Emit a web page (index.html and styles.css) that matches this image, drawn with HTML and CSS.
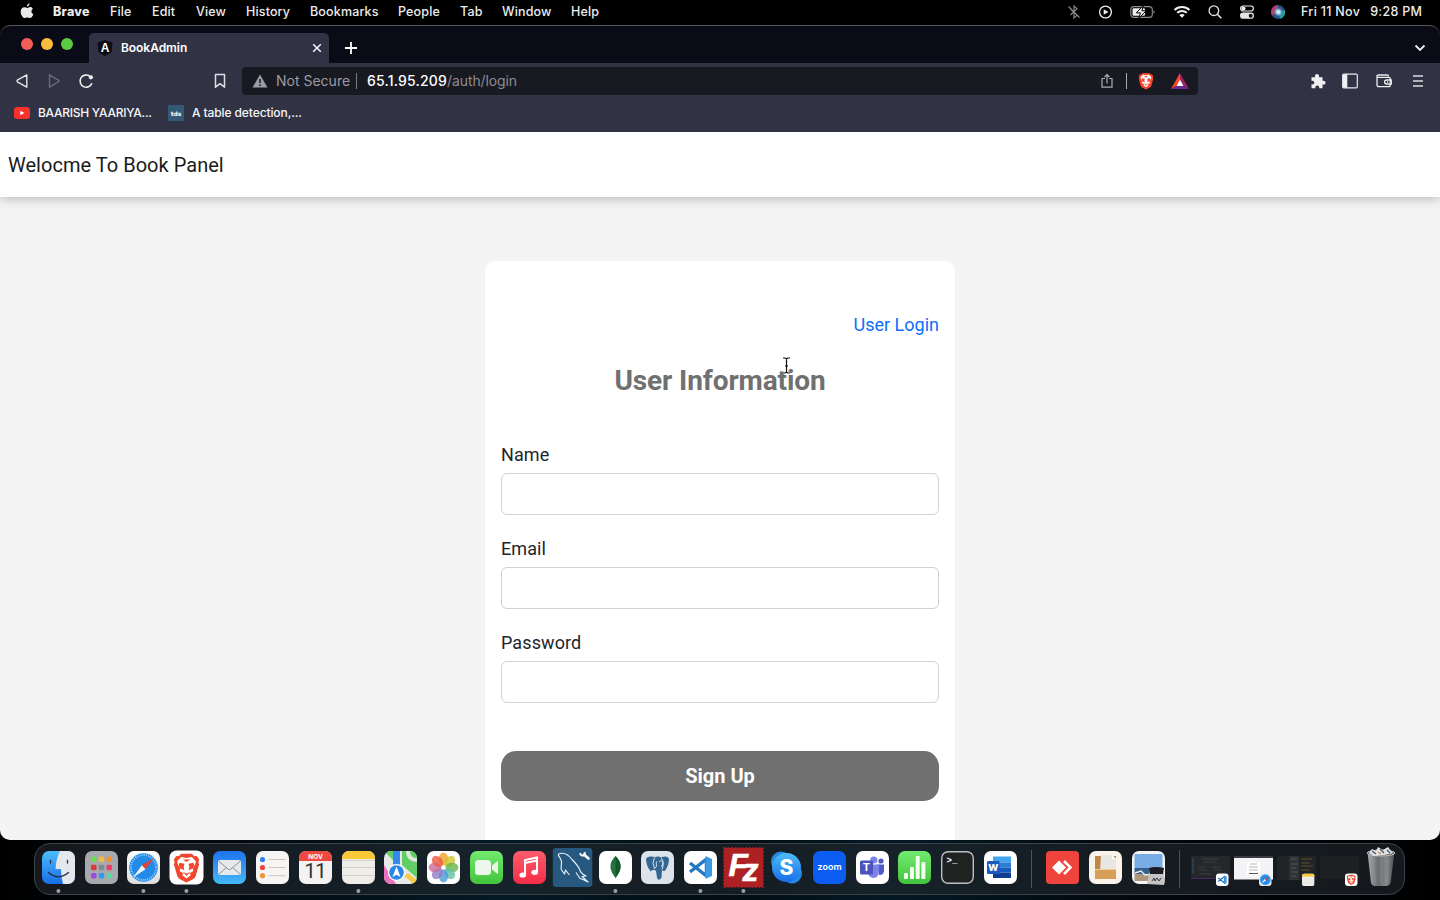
FILE: index.html
```html
<!DOCTYPE html>
<html lang="en">
<head>
<meta charset="utf-8">
<title>BookAdmin</title>
<link rel="stylesheet" href="styles.css">
</head>
<body>
<div class="desktop">
  <header class="menubar">
    <svg class="apple" width="14" height="17" viewBox="0 0 14 17"><path fill="#e9e9e9" d="M9.6.6c.1 1.500-1.200 3-2.700 3C6.700 2.200 8.100.7 9.600.6zM12.800 5.900c-2 1.200-1.700 4.200.6 5.100-.6 1.800-2 4-3.300 4-1 0-1.500-.6-2.800-.6s-1.800.6-2.700.6C2.900 15 .7 11.700.7 8.700c0-2.900 1.800-4.500 3.600-4.500 1.200 0 2 .7 2.900.7.9 0 1.700-.8 3.100-.8 1 0 2 .6 2.500 1.800z"/></svg>
    <nav class="menus"><b>Brave</b><span>File</span><span>Edit</span><span>View</span><span>History</span><span>Bookmarks</span><span>People</span><span>Tab</span><span>Window</span><span>Help</span></nav>
    <div class="status">
      <svg width="14" height="16" viewBox="0 0 14 16" fill="none" stroke="#8c8c8c" stroke-width="1.100"><path d="M3.500 5l6.500 6.200L7 14V2l3 2.700-6.500 6.300M1.500 2.500l11 11"/></svg>
      <svg width="14" height="16" viewBox="0 0 14 16"><circle cx="7.500" cy="8" r="5.900" fill="none" stroke="#eee" stroke-width="1.300"/><path fill="#eee" d="M5.700 5.200L10.500 8l-4.800 2.800z"/></svg>
      <svg width="26" height="16" viewBox="0 0 26 16"><rect x=".8" y="2.600" width="21.500" height="10.800" rx="3" fill="none" stroke="#8d8d8d" stroke-width="1.100"/><path fill="#8d8d8d" d="M23.500 6.200c1.600.6 1.600 3 0 3.600z"/><rect x="2.500" y="4.200" width="12.500" height="7.600" rx="1.300" fill="#eee"/><path fill="#eee" stroke="#000" stroke-width="1" d="M13.300 1.500L6.300 8.900h4.200L8.700 14.500l7.500-7.700h-4.300z"/></svg>
      <svg width="18" height="16" viewBox="0 0 18 16" fill="none" stroke="#f1f1f1" stroke-width="2"><path d="M1.500 6c4.200-4 10.800-4 15 0M4.200 8.800c2.700-2.500 6.900-2.500 9.600 0"/><path stroke="none" fill="#f1f1f1" d="M6.300 11c1.500-1.400 3.900-1.400 5.400 0L9 13.800z"/></svg>
      <svg width="14" height="16" viewBox="0 0 14 16" fill="none" stroke="#e5e5e5" stroke-width="1.300"><circle cx="5.900" cy="6.700" r="4.800"/><path stroke-width="1.600" d="M9.300 10.200l4 4"/></svg>
      <svg width="16" height="16" viewBox="0 0 16 16"><rect x="1.600" y="2" width="12.800" height="5" rx="2.500" fill="none" stroke="#eee" stroke-width="1.200"/><circle cx="4.500" cy="4.500" r="2" fill="#eee"/><rect x="1" y="8.600" width="14" height="6.200" rx="3.100" fill="#e5e5e5"/><circle cx="11.700" cy="11.700" r="2" fill="#111"/></svg>
      <svg width="14" height="16" viewBox="0 0 14 16"><defs><radialGradient id="siri"><stop offset="0" stop-color="#fff"/><stop offset=".35" stop-color="#9cdceb"/><stop offset="1" stop-color="#2e4b83" stop-opacity="0"/></radialGradient></defs><circle cx="7" cy="8" r="7" fill="#294b85"/><path fill="#b83f75" d="M7 8L1 11.500A7 7 0 0 1 7 1z"/><path fill="#279e9a" d="M7 8l7-2a7 7 0 0 1-5 8.700z"/><circle cx="7.300" cy="8" r="5.500" fill="url(#siri)"/></svg>
    </div>
    <div class="clock"><span>Fri 11 Nov</span><span>9:28 PM</span></div>
  </header>

  <div class="window">
    <div class="tabstrip">
      <div class="lights"><i class="close"></i><i class="min"></i><i class="max"></i></div>
      <div class="tab">
        <svg width="16" height="16" viewBox="0 0 16 16"><path fill="#0b0d17" d="M8 0l7.500 2.500-1.100 10L8 16l-6.400-3.500-1.100-10z"/><text x="8" y="12.200" text-anchor="middle" class="tab-letter">A</text></svg>
        <span class="tab-title">BookAdmin</span>
        <svg width="10" height="10" viewBox="0 0 10 10" stroke="#fff" stroke-width="1.400"><path d="M1.200 1.200l7.600 7.600M8.800 1.200L1.200 8.800"/></svg>
      </div>
      <svg class="plus" width="14" height="14" viewBox="0 0 14 14" stroke="#fff" stroke-width="1.800"><path d="M7 1v12M1 7h12"/></svg>
      <svg class="chev" width="12" height="8" viewBox="0 0 12 8" fill="none" stroke="#eee" stroke-width="1.800"><path d="M1.500 1.500L6 6l4.500-4.500"/></svg>
    </div>
    <div class="toolbar">
      <div class="nav">
        <svg width="14" height="16" viewBox="0 0 14 16" fill="none" stroke="#e4e4e8" stroke-width="1.400" stroke-linejoin="round"><path d="M11.800 1.800v12.400L2.300 8.800q-.8-.8 0-1.600z"/></svg>
        <svg width="14" height="16" viewBox="0 0 14 16" fill="none" stroke="#696b78" stroke-width="1.400" stroke-linejoin="round"><path d="M2.500 1.800v12.400L11.700 8.700q.6-.7 0-1.400z"/></svg>
        <svg width="16" height="16" viewBox="0 0 16 16" fill="none" stroke="#eee" stroke-width="1.600"><path d="M13.900 10.200A6.100 6.100 0 1 1 11.800 3.200"/><circle cx="12.900" cy="4.300" r="2.100" fill="#eee" stroke="none"/></svg>
      </div>
      <svg class="mark" width="12" height="16" viewBox="0 0 12 16" fill="none" stroke="#dedee3" stroke-width="1.500" stroke-linejoin="round"><path d="M1.500 1.500h9v12.700L6 10.700l-4.500 3.500z"/></svg>
      <div class="address">
        <svg width="16" height="14" viewBox="0 0 16 14"><path fill="#9a9ba4" d="M8 .5L15.500 13.500H.5z"/><path stroke="#191922" stroke-width="1.500" d="M8 5v4M8 10.300v1.600"/></svg>
        <span class="insecure">Not Secure</span><i class="bar"></i>
        <span class="url"><b>65.1.95.209</b>/auth/login</span>
        <svg class="share" width="12" height="16" viewBox="0 0 12 16" fill="none" stroke="#aaaab0" stroke-width="1.200"><path d="M4 5.500H1v8.700h10V5.500H8M6 10.500V1.700M3.500 4L6 1.500 8.500 4"/></svg>
        <i class="bar light"></i>
        <svg class="shield" width="16" height="18" viewBox="0 0 33 38"><use href="#lion"/></svg>
        <svg class="bat" width="18" height="16" viewBox="0 0 18 16"><path fill="#ff4724" d="M9 0L0 16l6-3.500L9 7z"/><path fill="#9e1f63" d="M9 0l9 16-6-3.500L9 7z"/><path fill="#662d91" d="M0 16l6-3.500h6l6 3.500z"/><path fill="#fff" d="M9 6.500l3.500 6.500h-7z"/></svg>
      </div>
      <div class="tools">
        <svg width="16" height="16" viewBox="0 0 16 16"><path fill="#f0f0f2" d="M1.500 4.200h3.600c-1-4.200 4.700-4.200 3.900 0h3.500v3.600c4.100-.9 4.100 4.700 0 3.800v3.600H9.200c.6-3.700-4.300-3.700-3.800 0H1.500v-3.900c3.700.8 3.700-4.100 0-3.400z"/></svg>
        <svg width="16" height="16" viewBox="0 0 16 16"><rect x=".7" y="1.200" width="14.600" height="13.600" rx="1" fill="none" stroke="#e8e8eb" stroke-width="1.200"/><path fill="#f0f0f2" d="M.7 1.200h4.600v13.600H.7z"/></svg>
        <svg width="16" height="16" viewBox="0 0 16 16" fill="none" stroke="#ececef" stroke-width="1.300"><path d="M1 3.200v8.500q0 2 2 2h9.500q1.800 0 1.800-2V5.900q0-1.500-1.800-1.500H2.500Q1 4.400 1 3.200 1 2 2.500 2H11q1.500 0 1.500 1.500"/><path d="M15.300 7h-4.500q-2.200 0-2.200 2t2.200 2h4.500z"/><path d="M11 9h1.200"/></svg>
        <svg width="12" height="16" viewBox="0 0 12 16" stroke="#dcdce1" stroke-width="1.500"><path d="M1 3h10M1 8h10M1 13h10"/></svg>
      </div>
    </div>
    <div class="bookmarks">
      <svg width="16" height="12" viewBox="0 0 16 12"><rect width="16" height="12" rx="3" fill="#f5322c"/><path fill="#fff" d="M6.300 3.700L10.500 6 6.300 8.300z"/></svg>
      <span class="bm1">BAARISH YAARIYA...</span>
      <svg width="16" height="16" viewBox="0 0 16 16"><path fill="#355876" d="M0 0h16v16H0z"/><text x="8" y="10.600" text-anchor="middle" class="tds">tds</text></svg>
      <span class="bm2">A table detection,...</span>
    </div>

    <div class="page">
      <div class="banner">Welocme To Book Panel</div>
      <main class="card">
        <a class="login">User Login</a>
        <h1>User Information</h1>
        <form>
          <label>Name<input type="text"></label>
          <label>Email<input type="text"></label>
          <label>Password<input type="text"></label>
          <button type="button">Sign Up</button>
        </form>
      </main>
      <svg class="cursor" width="9" height="17" viewBox="0 0 9 17" fill="none" stroke="#fff" stroke-width="2.600"><path d="M1 1h2.200L4.500 2 5.800 1H8M1 16h2.200l1.300-1 1.300 1H8M4.500 2v13M3 9h3"/><path stroke="#111" stroke-width="1.200" d="M1 1h2.200L4.500 2 5.800 1H8M1 16h2.200l1.300-1 1.300 1H8M4.500 2v13M3 9h3"/></svg>
    </div>
  </div>

  <footer class="dock">
    <svg class="app on" viewBox="-5 -7 42.83 50"><defs>
      <linearGradient id="blue" x2="0" y2="1"><stop stop-color="#4dbdf8"/><stop offset="1" stop-color="#176eea"/></linearGradient>
      <linearGradient id="mailg" x2="0" y2="1"><stop stop-color="#1f72ee"/><stop offset="1" stop-color="#45b8f8"/></linearGradient>
      <linearGradient id="green" x2="0" y2="1"><stop stop-color="#73ea70"/><stop offset="1" stop-color="#42c43c"/></linearGradient>
      <linearGradient id="pink" x2="0" y2="1"><stop stop-color="#fb5c6d"/><stop offset="1" stop-color="#f52d47"/></linearGradient>
      <linearGradient id="silver" x2="0" y2="1"><stop stop-color="#fff"/><stop offset="1" stop-color="#dcdcdf"/></linearGradient>
      <linearGradient id="trashg"><stop stop-color="#aaa"/><stop offset=".4" stop-color="#696d70"/><stop offset=".7" stop-color="#858789"/><stop offset="1" stop-color="#4d5154"/></linearGradient>
      <clipPath id="tile"><rect width="33" height="33" rx="7"/></clipPath>
      <g id="lion"><path fill="#f4452d" d="M10 2h13l3 3 3-.3L32 9l-1 3 .8 3-4 14q-1 3-4 4.500L16.500 37l-7.300-3.500q-3-1.500-4-4.500L1.200 15l.8-3-1-3 3-4.300L7 5z"/><path fill="#fff" d="M10 6l6.500 1L23 6l5 5-1 4-3 5 1 3-5 3 2 2-5.500 4L11 28l2-2-5-3 1-3-3-5-1-4z"/><path fill="#f4452d" d="M8 13l6 1-1 4 1 4-5-2-2-4zM25 13l-6 1 1 4-1 4 5-2 2-4zM12 24l4.500 2 4.500-2-4.500 5zM12 9h9l-4.500 3z"/></g>
    </defs><g clip-path="url(#tile)"><path fill="url(#blue)" d="M0 0h33v33H0z"/><path fill="#e5e7ec" d="M18 0q-4 8-4.500 18H19q0 8 2 15h12V0z"/></g><g fill="none" stroke="#26334a" stroke-width="1.400" stroke-linecap="round"><path d="M8.500 9.500v2.500M25.500 9.500v2.500M6.500 21.500q10 8.500 20 0"/></g><circle class="dot" cx="16.400" cy="40" r="2"/></svg>
    <svg class="app" viewBox="-5 -7 42.83 50"><rect width="33" height="33" rx="7" fill="#a8a9ad"/><g><rect x="6" y="5.500" width="5.500" height="5.500" rx="1.400" fill="#6bdd57"/><rect x="13.700" y="5.500" width="5.500" height="5.500" rx="1.400" fill="#f4b940"/><rect x="21.500" y="5.500" width="5.500" height="5.500" rx="1.400" fill="#f09335"/><rect x="6" y="13.700" width="5.500" height="5.500" rx="1.400" fill="#dd373a"/><rect x="13.700" y="13.700" width="5.500" height="5.500" rx="1.400" fill="#7b8c98"/><rect x="21.500" y="13.700" width="5.500" height="5.500" rx="1.400" fill="#f13c66"/><rect x="6" y="22" width="5.500" height="5.500" rx="1.400" fill="#9b4ae0"/><rect x="13.700" y="22" width="5.500" height="5.500" rx="1.400" fill="#309aef"/><rect x="21.500" y="22" width="5.500" height="5.500" rx="1.400" fill="#62d4a5"/></g></svg>
    <svg class="app" viewBox="-5 -7 42.83 50"><rect width="33" height="33" rx="7" fill="url(#silver)"/><g id="compass"><circle cx="16.500" cy="16.500" r="14.300" fill="#218be7"/><circle cx="16.500" cy="16.500" r="12.500" fill="none" stroke="#d3edff" stroke-width="2" stroke-dasharray=".7 1.480"/><path fill="#ee3d35" d="M27 7L14.800 14.300l3.700 4z"/><path fill="#f4f4f4" d="M6 26.500l8.800-12.200 3.700 4z"/></g><circle class="dot" cx="16.400" cy="40" r="2"/></svg>
    <svg class="app" viewBox="-5 -7 42.83 50"><rect x="-.5" y="-.5" width="34" height="34" rx="7" fill="#fff"/><svg x="3" y="1" width="27" height="31.500" viewBox="0 0 33 38"><use href="#lion"/></svg><circle class="dot" cx="16.400" cy="40" r="2"/></svg>
    <svg class="app" viewBox="-5 -7 42.83 50"><rect width="33" height="33" rx="7" fill="url(#mailg)"/><rect x="5" y="9" width="23" height="15" rx="2" fill="#e7e9ec"/><path fill="none" stroke="#8b929b" d="M5.500 10L15 18q1.500 1.200 3 0l9.500-8M5.500 23.500l8-7M27.500 23.500l-8-7"/></svg>
    <svg class="app" viewBox="-5 -7 42.83 50"><rect width="33" height="33" rx="7" fill="#f7f5f3"/><path stroke="#c9c9ca" d="M12.500 8.500H30M12.500 16.500H30M12.500 24.700H30"/><circle cx="6.500" cy="8.500" r="2.600" fill="#2c80ed"/><circle cx="6.500" cy="16.500" r="2.600" fill="#e94440"/><circle cx="6.500" cy="24.700" r="2.600" fill="#f3963a"/></svg>
    <svg class="app" viewBox="-5 -7 42.83 50"><g clip-path="url(#tile)"><path fill="#f4f2f0" d="M0 0h33v33H0z"/><path fill="#ef4a42" d="M0 0h33v10H0z"/></g><text x="16.500" y="7.900" text-anchor="middle" class="month">NOV</text><text x="16" y="27.500" text-anchor="middle" class="date">11</text></svg>
    <svg class="app" viewBox="-5 -7 42.83 50"><g id="notes" clip-path="url(#tile)"><path fill="#efede8" d="M0 0h33v33H0z"/><path fill="#fbc936" d="M0 0h33v8H0z"/><path stroke="#d3d1cd" d="M0 9.500h33M0 16.500h33M0 24.500h33"/></g><circle class="dot" cx="16.400" cy="40" r="2"/></svg>
    <svg class="app" viewBox="-5 -7 42.83 50"><g clip-path="url(#tile)"><path fill="#e6e9e8" d="M0 0h33v33H0z"/><path fill="#61cd67" d="M0 0h10v10zM18 0h15v27L18 14z"/><circle cx="32" cy="1" r="8" fill="none" stroke="#dfe6dd" stroke-width="4"/><path fill="#ec70be" d="M0 14v19h12z"/><path fill="#f8cb45" d="M24 22l9 7v4h-3L20 25z"/><path fill="#3389ed" d="M9 0h7v20H9z"/></g><circle cx="12.500" cy="21.500" r="8.500" fill="#fff"/><circle cx="12.500" cy="21.500" r="7.300" fill="#2b86e6"/><path fill="#fff" d="M12.500 15.500l4 10.500-4-2.200L8.500 26z"/></svg>
    <svg class="app" viewBox="-5 -7 42.83 50"><rect width="33" height="33" rx="7" fill="#fff"/><g class="petals" transform="translate(16.500 16.500)"><ellipse cy="-8.500" rx="4.800" ry="6.400" fill="#f5a22e"/><ellipse cy="-8.500" rx="4.800" ry="6.400" fill="#d1c735" transform="rotate(45)"/><ellipse cy="-8.500" rx="4.800" ry="6.400" fill="#6bb94c" transform="rotate(90)"/><ellipse cy="-8.500" rx="4.800" ry="6.400" fill="#62c2a4" transform="rotate(135)"/><ellipse cy="-8.500" rx="4.800" ry="6.400" fill="#4e9cda" transform="rotate(180)"/><ellipse cy="-8.500" rx="4.800" ry="6.400" fill="#937fc8" transform="rotate(225)"/><ellipse cy="-8.500" rx="4.800" ry="6.400" fill="#c9709f" transform="rotate(270)"/><ellipse cy="-8.500" rx="4.800" ry="6.400" fill="#ee5c47" transform="rotate(315)"/></g></svg>
    <svg class="app" viewBox="-5 -7 42.83 50"><rect width="33" height="33" rx="7" fill="url(#green)"/><rect x="5" y="9" width="16" height="15" rx="3.500" fill="#eef7ec"/><path fill="#e7f5e5" d="M22 14.500l5-4q1-.5 1 .5v11q0 1-1 .5l-5-4z"/></svg>
    <svg class="app" viewBox="-5 -7 42.83 50"><rect width="33" height="33" rx="7" fill="url(#pink)"/><path fill="none" stroke="#fff" stroke-width="2" d="M12 24V9l12-2.500V21M12 12l12-2.500"/><ellipse cx="9.700" cy="24" rx="3.300" ry="2.600" fill="#fff"/><ellipse cx="21.700" cy="21.300" rx="3.300" ry="2.600" fill="#fff"/></svg>
    <svg class="app" viewBox="-5 -7 42.83 50"><rect x="-3.200" y="-3" width="39.500" height="39" rx="3" fill="#27587f"/><path fill="none" stroke="#eef4fa" stroke-width="1.100" stroke-linejoin="round" d="M2.500 4Q2 2.500 4 2.500c5-1 9 2 12 6 4 4 7 7 8 11 1 3 3 4 6 5.500l-4 .5 6 5.500-5-2.500-3-1-4-6M2.500 4c1 3 3 4 3 7 0 5-1 6 0 8l3 4 1-4 4 5"/><path stroke="#fff" stroke-width="2.600" stroke-linecap="round" d="M28 3.500l4.500 4"/><path fill="none" stroke="#fff" stroke-width="1.800" d="M24.300 2q0 3 3 2.700 2.500-.7 1.200-3.500"/></svg>
    <svg class="app" viewBox="-5 -7 42.83 50"><rect width="33" height="33" rx="7" fill="#fff"/><path fill="#26733f" d="M16.500 5q-9 9-2 19l2 3 2-3q7-10-2-19z"/><path fill="#15572d" d="M16.500 5q9 9 2 19l-2 3z"/><circle class="dot" cx="16.400" cy="40" r="2"/></svg>
    <svg class="app" viewBox="-5 -7 42.83 50"><rect width="33" height="33" rx="7" fill="#dce3eb"/><path fill="#336791" d="M5 8q1-3 5-2.500 3 0 4 .7 3-1.200 6 0 7-2 8 2 0 6-4 11.500-2 .8-3-1l-.5 8q-3 4-4.500 0l-1-7-3-1-2 2Q5 15 5 8z"/><path fill="none" stroke="#e6edf3" stroke-width=".9" d="M13.500 6.500q-3 6 0 11l2-2q-.5-3 0-5M20 6.500q4 5 1 12M18 11q3-3 4 1l-1.500 4M10 20q2 2 4-1"/></svg>
    <svg class="app" viewBox="-5 -7 42.83 50"><rect width="33" height="33" rx="7" fill="#fff"/><g id="vs"><path fill="none" stroke="#2478bf" stroke-width="3.500" stroke-linejoin="round" d="M6 12l16.500 13V8L6 21"/><path fill="#3a9be8" d="M21.500 5l6.500 3v17l-6.500 3z"/></g><circle class="dot" cx="16.400" cy="40" r="2"/></svg>
    <svg class="app" viewBox="-5 -7 42.830 50"><rect x="-3" y="-3" width="39" height="39" fill="#ad2024" stroke="#ad2024" stroke-width="1.600" stroke-dasharray="2 1.500"/><text x="1.500" y="25" class="fz">F<tspan dx="-5.500" dy="5.500">z</tspan></text><circle class="dot" cx="16.400" cy="40" r="2"/></svg>
    <svg class="app" viewBox="-5 -7 42.83 50"><circle cx="11" cy="10.500" r="10" fill="#248cdb"/><circle cx="22" cy="22.500" r="10" fill="#2589df"/><circle cx="16.500" cy="16.500" r="14.500" fill="url(#blue)"/><text x="16.500" y="24.500" text-anchor="middle" class="skype">S</text></svg>
    <svg class="app" viewBox="-5 -7 42.83 50"><rect width="33" height="33" rx="7" fill="#0b5cf1"/><text x="16.500" y="18.800" text-anchor="middle" class="zoom">zoom</text></svg>
    <svg class="app" viewBox="-5 -7 42.83 50"><rect width="33" height="33" rx="7" fill="#fff"/><circle cx="17.800" cy="9" r="3.600" fill="#7b83eb"/><circle cx="25" cy="10" r="2.600" fill="#4f58bd"/><path fill="#5059c9" d="M21 13.500h7v7q-1 4-5 3.500z"/><path fill="#7b83eb" d="M12 13.500h11V21q-1 6-6 6-5-1-5-6z"/><rect x="4" y="9.500" width="13" height="14" rx="1.500" fill="#4b53bc"/><text x="10.500" y="20.500" text-anchor="middle" class="office">T</text></svg>
    <svg class="app" viewBox="-5 -7 42.83 50"><rect width="33" height="33" rx="7" fill="url(#green)"/><g fill="#f3fff1"><rect x="6" y="22" width="4" height="6" rx="1"/><rect x="12" y="16" width="4" height="12" rx="1"/><rect x="17.700" y="5" width="4" height="23" rx="1"/><rect x="23.400" y="11" width="4" height="17" rx="1"/></g></svg>
    <svg class="app" viewBox="-5 -7 42.83 50"><rect x=".7" y=".7" width="31.600" height="31.600" rx="6.500" fill="#202121" stroke="#babfc1" stroke-width="1.400"/><text x="5.500" y="12" class="term">&gt;_</text></svg>
    <svg class="app" viewBox="-5 -7 42.83 50"><rect width="33" height="33" rx="7" fill="#fff"/><path fill="#42a5ee" d="M9 5.500h18v6H9z"/><path fill="#2b7cd3" d="M9 11.500h18v5H9z"/><path fill="#185abd" d="M9 16.500h18v5H9z"/><path fill="#103f91" d="M9 21.500h18V27H9z"/><rect x="3" y="10" width="12.500" height="13" rx="1.200" fill="#185abd"/><text x="9.200" y="19.800" text-anchor="middle" class="word">W</text></svg>
    <i class="sep"></i>
    <svg class="app" viewBox="-5 -7 42.830 50"><rect width="33" height="33" rx="4" fill="#ef443b"/><path fill="#fff" d="M13 9.500l7 7-7 7-7-7z"/><path fill="none" stroke="#fff" stroke-width="2.600" d="M18 10l6.500 6.500L18 23"/></svg>
    <svg class="app" viewBox="-5 -7 42.83 50"><rect width="33" height="33" rx="7" fill="#faf3e9"/><path fill="#bf8749" d="M6 5h21v14H6z"/><path fill="#e8e7e5" d="M12 4h11l4 4v12H11z"/><path fill="#fff" d="M23 4v4h4z"/><path fill="#d79e5a" d="M6 18h21v10H6z"/><path stroke="#f3cd96" d="M6 18.500h21"/></svg>
    <svg class="app" viewBox="-5 -7 42.83 50"><rect width="33" height="33" rx="7" fill="#f3f4f5"/><path fill="#77ade4" d="M2.500 3h28v14h-28z"/><path fill="#35608b" d="M2.500 17h28v6h-28z"/><path fill="#ae977d" d="M2.500 23h28v7h-28z"/><path stroke="#e7edf1" stroke-width="1.500" fill="none" d="M3 22l6-2 4 4 7-1"/><path fill="#c4c4c4" d="M17 24l1-7 13 1 2 12-1 4-17-1z"/><path fill="#1b1d20" d="M17 17q7-2 15 0l-1 6H18z"/><path fill="none" stroke="#333" d="M20 30l2-3 1 3 2-3 2 3 2-3"/></svg>
    <i class="sep second"></i>
    <svg class="app" viewBox="-5 -7 42.83 50"><path fill="#25272b" d="M-3 5h39v23H-3z"/><path stroke="#4c2c61" d="M-3 27.500h39"/><path stroke="#4f5254" stroke-width=".6" d="M8 8h16M10 11h11M4 16h8M18 16h8M5 19h8M20 19h8M5 23h12"/><path stroke="#31506b" d="M-1 7v16"/><rect x="22" y="22.500" width="12.500" height="12.500" rx="3" fill="#fff"/><g transform="translate(22 22.500) scale(.38)"><use href="#vs"/></g></svg>
    <svg class="app" viewBox="-5 -7 42.83 50"><path fill="#f4f4f6" d="M-3 5h39v23.500H-3z"/><path fill="#393a44" d="M-3 5h39v2H-3z"/><path fill="#fff" d="M10 11h13v13H10z"/><path stroke="#999" stroke-width=".7" d="M13 13h7M12 16h9M12 19h9"/><path stroke="#555" d="M12 22.500h9"/><rect x="22" y="22.500" width="12.500" height="12.500" rx="3" fill="#e8eef2"/><g transform="translate(22 22.500) scale(.38)"><use href="#compass"/></g></svg>
    <svg class="app" viewBox="-5 -7 42.83 50"><path fill="#202427" d="M-3 5h39v24H-3z"/><path fill="#303336" d="M9 5h10v24H9z"/><path stroke="#646566" stroke-width=".7" d="M11 8h6M11 13h7M11 17h5M11 21h7M11 25h5"/><path stroke="#7c6332" stroke-width=".7" d="M21 8h11M21 12h9M21 15h12M21 19h9"/><g transform="translate(22 22.500) scale(.38)"><use href="#notes"/></g></svg>
    <svg class="app" viewBox="-5 -7 42.83 50"><path fill="#1d2023" d="M-3 5h39v23H-3z"/><rect x="22" y="22.500" width="12.500" height="12.500" rx="3" fill="#fff"/><svg x="23.500" y="23.200" width="9.500" height="11" viewBox="0 0 33 38"><use href="#lion"/></svg></svg>
    <svg class="app trash" viewBox="-5 -7 42.83 50"><path fill="url(#trashg)" d="M1.500 1l3.500 31q.5 2 3 3h13q3-1 3.500-3L28.500 1z"/><ellipse cx="15" cy="2" rx="14" ry="3" fill="#666a6e" stroke="#b8babb"/><path fill="#e1e3e5" d="M3 2l3-4 4 2 2-4 5 3 5-3 3 4 2 2-9 2-10 1z"/><path stroke="#40515f" stroke-width="1.200" d="M6 0l4 3M14-2l4 4M21-1l3 3"/><path stroke="#c68e55" stroke-width="1.500" d="M12 1l3 2"/><path stroke="#fff" stroke-opacity=".06" stroke-width="2" d="M7 7l2 24M15 7v25M23 7l-2 24"/></svg>
  </footer>
</div>
</body>
</html>
```
FILE: styles.css
```css
* { box-sizing: border-box; }
body { margin: 0; background: #000; overflow: hidden; }
svg { display: block; flex: none; }
.desktop { width: 1440px; height: 900px; display: flex; flex-direction: column; background: linear-gradient(90deg, #000 0%, #020b12 18%, #031a25 35%, #020c13 50%, #031924 62%, #02080e 78%, #000 100%); font-family: Inter, "Liberation Sans", sans-serif; }

.menubar { height: 25px; flex: none; display: flex; align-items: center; padding: 0 18px 2px 20px; background: #000; color: #ececec; font-size: 12.500px; font-weight: 500; white-space: nowrap; }
.menus { display: grid; grid-template-columns: 57px 42px 44px 50px 64px 88px 62px 42px 69px 40px; margin-left: 19px; letter-spacing: .15px; }
.menus b { font-weight: 800; letter-spacing: .3px; }
.status { margin: 1px 0 0 auto; display: grid; grid-template-columns: 31px 32px 43px 35px 31px 32px 14px; align-items: center; }
.clock { display: flex; justify-content: space-between; width: 121px; margin-left: 16px; }
.clock span { letter-spacing: .3px; margin-right: -.3px; }

.window { height: 815px; flex: none; display: flex; flex-direction: column; overflow: hidden; border-radius: 10px; background: #313344; }
.tabstrip { height: 38px; flex: none; display: flex; align-items: center; padding: 7px 14px 0 21px; background: #0b0b17; border-top: 1px solid #56565f; border-radius: 10px 10px 0 0; }
.lights { display: flex; gap: 8px; align-self: flex-start; margin-top: 5px; }
.lights i { width: 12px; height: 12px; border-radius: 50%; }
.close { background: #f25f58; }
.min { background: #f9be3e; }
.max { background: #5acb43; }
.tab { width: 240px; height: 30px; margin-left: 16px; display: flex; align-items: center; padding: 0 7px 0 8px; background: #313344; border-radius: 5px 5px 0 0; }
.tab-letter { font: bold 12px "Liberation Sans", sans-serif; fill: #fff; }
.tab-title { margin: 0 auto 0 8px; padding-bottom: 1px; font-size: 12px; font-weight: 600; color: #fff; letter-spacing: -.05px; }
.plus { margin-left: 15px; }
.chev { margin-left: auto; }

.toolbar { height: 36px; flex: none; display: flex; align-items: center; padding: 0 16px 0 15px; }
.nav { display: grid; grid-template-columns: 32px 31px 16px; align-items: center; }
.mark { margin-left: 120px; }
.address { width: 956px; height: 28px; margin-left: 16px; display: flex; align-items: center; padding: 0 9px 0 10px; background: #191922; border-radius: 4px; font-size: 14px; color: #9a9ba4; }
.insecure { width: 74px; margin: -1px 0 0 8px; white-space: nowrap; }
.bar { width: 1px; height: 16px; margin-left: 6px; background: #777883; }
.url { margin: -1px 0 0 10px; color: #8c8c92; letter-spacing: -.12px; }
.url b { font-weight: 500; letter-spacing: .2px; color: #fff; }
.share { margin-left: auto; }
.light { margin-left: 13px; background: #aaaab0; }
.shield { margin-left: 11px; }
.bat { margin-left: 17px; }
.tools { display: grid; grid-template-columns: 32px 34px 36px 12px; align-items: center; margin-left: auto; }

.bookmarks { height: 33px; flex: none; display: flex; align-items: center; padding: 0 14px 5px; font-size: 12px; font-weight: 500; color: #f6f6f8; white-space: nowrap; }
.bookmarks span { padding-bottom: 2px; }
.bm1 { width: 114px; margin: 0 16px 0 8px; letter-spacing: -.27px; }
.bm2 { margin-left: 8px; letter-spacing: -.1px; }
.tds { font: bold 6px "DejaVu Sans", sans-serif; fill: #fff; }

.page { position: relative; flex: 1; min-height: 0; overflow: hidden; background: #f4f4f4; font-family: Roboto, sans-serif; color: #212529; }
.banner { height: 65px; padding: 1px 8px 0; background: #fff; box-shadow: 0 2px 10px rgba(0, 0, 0, .24); font-size: 20px; line-height: 65px; letter-spacing: .03px; color: #1b1b1b; }
.card { width: 470px; height: 640px; margin: 64px auto 0; padding: 50px 16px 0; display: flex; flex-direction: column; background: #fff; border-radius: 10px; }
.login { align-self: flex-end; font-size: 18px; line-height: 27px; color: #0d6efd; }
.card h1 { margin: 26px 0 0; text-align: center; font-size: 28px; line-height: 34px; font-weight: 700; letter-spacing: -.1px; color: #707070; }
.card form { display: flex; flex-direction: column; margin-top: 43px; }
.card label { display: block; height: 94px; font-size: 18px; line-height: 27px; letter-spacing: .1px; }
.card input { display: block; width: 438px; height: 42px; margin-top: 5px; border: 1px solid #ced4da; border-radius: 6px; background: #fff; }
.card button { height: 50px; margin-top: 28px; border: 0; border-radius: 15px; background: #707070; color: #fff; font: 700 20px Roboto, sans-serif; }
.cursor { position: absolute; left: 782px; top: 225px; }

.dock { width: 1371px; height: 52px; flex: none; display: flex; align-items: center; margin: 3px 0 0 34.400px; padding-left: 1.400px; background: rgba(32, 39, 44, .65); border: 1px solid #3c4348; border-radius: 16px; }
.app { width: 42.830px; height: 50px; overflow: visible; }
.dot { fill: #9aa1a7; }
.sep { width: 1px; height: 38px; flex: none; margin: 0 9px 0 9.500px; background: #4c5256; }
.second { margin-right: 9px; }
.petals ellipse { opacity: .82; }
.month { font: 700 6.500px Inter, sans-serif; fill: #fff; }
.date { font: 400 21px Roboto, sans-serif; fill: #333; letter-spacing: -1px; }
.fz { font: italic 700 32px "Liberation Sans", sans-serif; fill: #fff; stroke: #fff; stroke-width: .5px; }
.skype { font: 800 21px Inter, sans-serif; fill: #fff; }
.zoom { font: 600 9px Inter, sans-serif; fill: #fff; }
.office { font: 700 11px Inter, sans-serif; fill: #fff; }
.word { font: 800 9.500px Inter, sans-serif; fill: #fff; }
.term { font: bold 9px "Liberation Mono", monospace; fill: #fff; }
```
